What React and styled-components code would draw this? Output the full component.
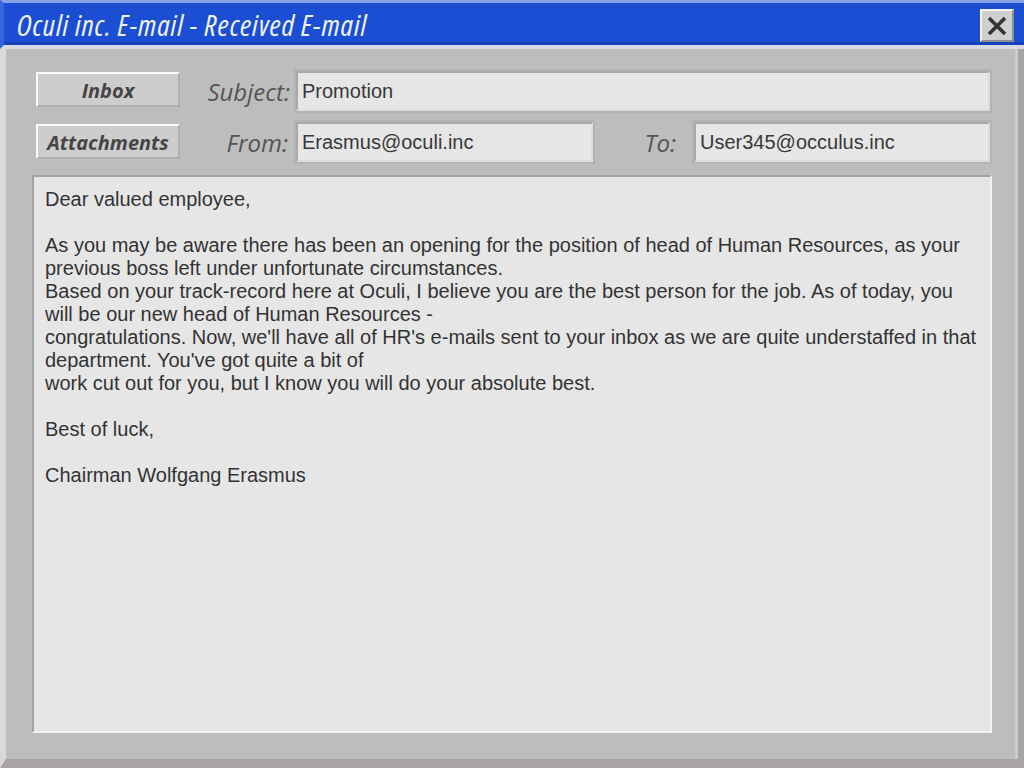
import React from "react";
import styled, { createGlobalStyle } from "styled-components";

const Global = createGlobalStyle`
  html, body {
    margin: 0;
    padding: 0;
    height: 100%;
    background: #bdbdbd;
  }
  #root {
    height: 100%;
  }
`;

const Ventana = styled.div`
  height: 100vh;
  display: flex;
  flex-direction: column;
  overflow: hidden;
`;

const BarraTitulo = styled.div`
  height: 42px;
  flex-shrink: 0;
  display: flex;
  align-items: center;
  justify-content: space-between;
  padding: 0 10px 0 13px;
  background: #1b4ed2;
  border-top: 3px solid #85a2e6;
  border-left: 4px solid #3564dc;
  border-bottom: 4px solid #d9dae4;
  box-shadow: inset 0 -3px 0 #1643bd;
`;

const TextoTitulo = styled.h1`
  margin: 0;
  font-family: "Open Sans", "DejaVu Sans", sans-serif;
  font-style: italic;
  font-weight: 500;
  font-size: 30px;
  font-stretch: 75%;
  letter-spacing: 0.9px;
  color: #eef3ff;
  white-space: nowrap;
`;

const BotonCerrar = styled.button`
  width: 34px;
  height: 33px;
  margin-top: 3px;
  padding: 0;
  display: flex;
  align-items: center;
  justify-content: center;
  background: #cfcfcf;
  border: 2px solid;
  border-color: #f4f4f4 #8e8e8e #8e8e8e #f4f4f4;
  cursor: pointer;
`;

const Panel = styled.div`
  flex: 1;
  display: flex;
  flex-direction: column;
  gap: 13px;
  padding: 22px 26px 26px 26px;
  background: #bdbdbd;
  border-left: 6px solid #dadada;
  border-right: 6px solid #a8a4a4;
  border-bottom: 9px solid #a8a4a4;
  box-shadow: inset -3px 0 0 #cbcbcb;
`;

const Cabecera = styled.div`
  display: grid;
  grid-template-columns: 144px 116px 297px 101px 1fr;
  grid-template-rows: 40px 40px;
  row-gap: 11px;
  padding: 0 2px 0 4px;
  align-items: center;
`;

const Boton = styled.button`
  height: 35px;
  width: 144px;
  align-self: start;
  margin-top: ${(p) => p.$desfase}px;
  padding: 2px 0 0;
  background: #cdcdcd;
  border: 2px solid;
  border-color: #fbfbfb #b0b0b0 #b0b0b0 #fbfbfb;
  font-family: "Open Sans", "DejaVu Sans", sans-serif;
  font-style: italic;
  font-weight: 700;
  font-size: 20px;
  color: #454545;
  cursor: pointer;
`;

const Etiqueta = styled.label`
  justify-self: end;
  padding-right: ${(p) => p.$derecha || 6}px;
  font-family: "Open Sans", "DejaVu Sans", sans-serif;
  font-style: italic;
  font-size: 24px;
  color: #555555;
  white-space: nowrap;
`;

const Campo = styled.div`
  grid-column: ${(p) => p.$columnas || "auto"};
  height: 40px;
  box-sizing: border-box;
  display: flex;
  align-items: center;
  padding-left: 4px;
  background: #e6e6e6;
  border: 2px solid;
  border-color: #a9a9a9 #dcdcdc #dcdcdc #a9a9a9;
  box-shadow: 0 0 0 2px #b3b3b3;
  font-family: "Liberation Sans", Arial, sans-serif;
  font-size: 20px;
  color: #383838;
`;

const Cuerpo = styled.div`
  flex: 1;
  box-sizing: border-box;
  padding: 11px 11px;
  background: #e6e6e6;
  border: 2px solid;
  border-color: #a3a3a3 #f3f3f3 #f3f3f3 #a3a3a3;
  font-family: "Liberation Sans", Arial, sans-serif;
  font-size: 20px;
  line-height: 23px;
  color: #333333;
`;

const Linea = styled.div`
  white-space: nowrap;
  min-height: 23px;
`;

const lineas = [
  "Dear valued employee,",
  "",
  "As you may be aware there has been an opening for the position of head of Human Resources, as your",
  "previous boss left under unfortunate circumstances.",
  "Based on your track-record here at Oculi, I believe you are the best person for the job. As of today, you",
  "will be our new head of Human Resources -",
  "congratulations. Now, we'll have all of HR's e-mails sent to your inbox as we are quite understaffed in that",
  "department. You've got quite a bit of",
  "work cut out for you, but I know you will do your absolute best.",
  "",
  "Best of luck,",
  "",
  "Chairman Wolfgang Erasmus",
];

const IconoCerrar = () => (
  <svg width="22" height="22" viewBox="0 0 22 22">
    <path d="M3 3 L19 19 M19 3 L3 19" stroke="#333" strokeWidth="3.6" strokeLinecap="butt" />
  </svg>
);

export default function App() {
  return (
    <>
      <Global />
      <Ventana>
        <BarraTitulo>
          <TextoTitulo>Oculi inc. E-mail - Received E-mail</TextoTitulo>
          <BotonCerrar aria-label="Close">
            <IconoCerrar />
          </BotonCerrar>
        </BarraTitulo>

        <Panel>
          <Cabecera>
            <Boton $desfase={1}>Inbox</Boton>
            <Etiqueta>Subject:</Etiqueta>
            <Campo $columnas="3 / 6">Promotion</Campo>

            <Boton $desfase={2}>Attachments</Boton>
            <Etiqueta $derecha={8}>From:</Etiqueta>
            <Campo>Erasmus@oculi.inc</Campo>
            <Etiqueta $derecha={18}>To:</Etiqueta>
            <Campo>User345@occulus.inc</Campo>
          </Cabecera>

          <Cuerpo>
            {lineas.map((texto, i) => (
              <Linea key={i}>{texto}</Linea>
            ))}
          </Cuerpo>
        </Panel>
      </Ventana>
    </>
  );
}
